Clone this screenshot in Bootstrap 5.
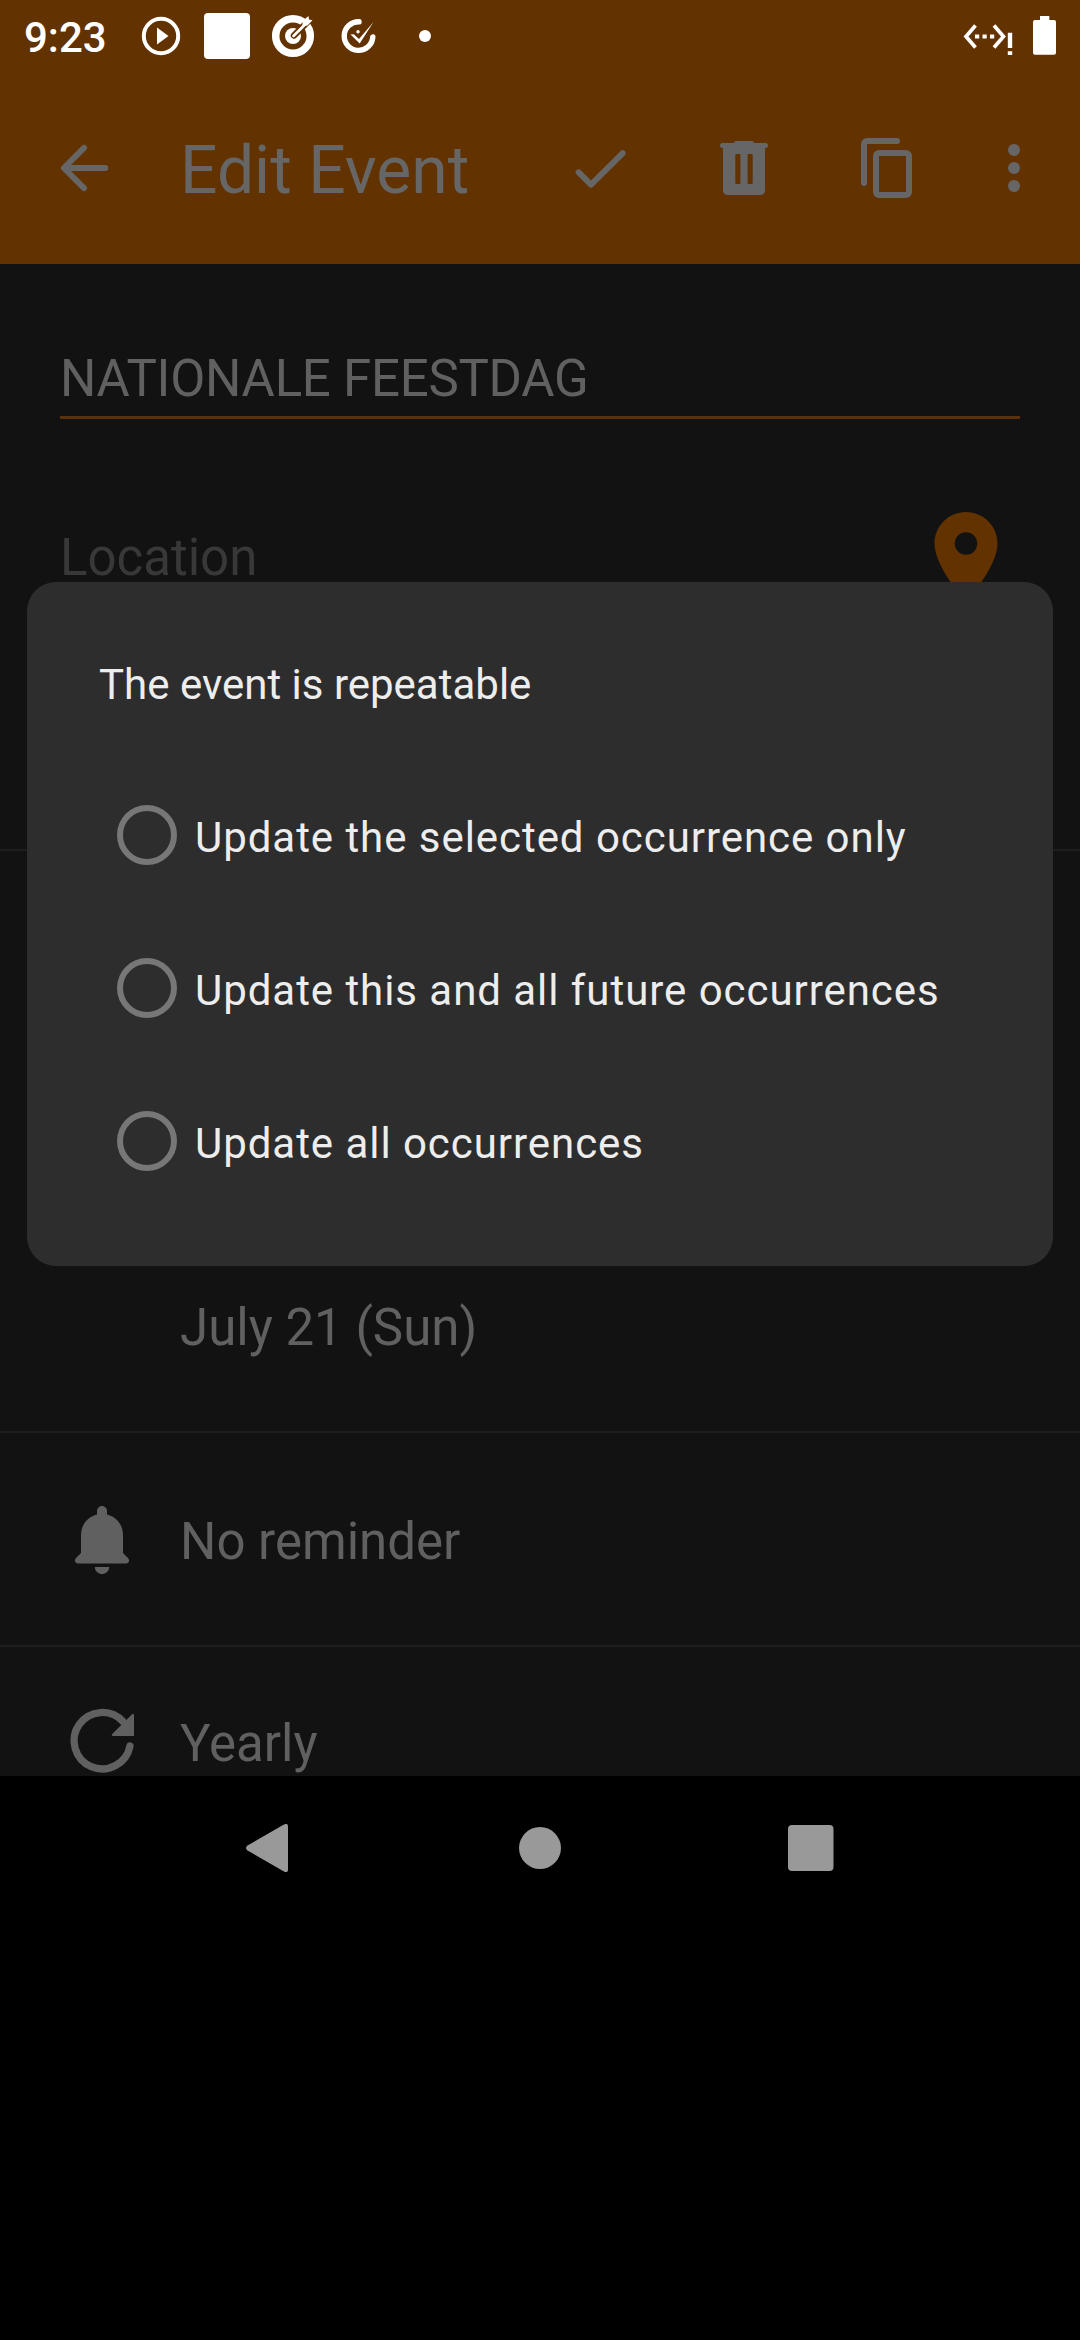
<!DOCTYPE html>
<html lang="en">
<head>
<meta charset="utf-8">
<meta name="viewport" content="width=device-width, initial-scale=1">
<title>Edit Event</title>
<link href="https://cdn.jsdelivr.net/npm/bootstrap@5.3.0/dist/css/bootstrap.min.css" rel="stylesheet">
<style>
  body { background: #000; font-family: Roboto, "Noto Sans", sans-serif; width: 1080px; height: 2340px; overflow: hidden; line-height: 1; }
  svg { display: block; flex: none; }
  .screen { height: 1776px; background: #121212; }
  .screen > * { flex: none; }
  .status { height: 72px; background: #623200; padding-left: 24px; padding-right: 21px; }
  .clock { font-size: 42px; font-weight: 500; color: #fff; width: 115px; line-height: 76px; height: 72px; }
  .toolbar { height: 192px; background: #623200; padding: 0 30px 0 48px; color: #666; }
  .toolbar h1 { font-size: 66px; font-weight: 400; line-height: 72px; margin: 6px 0 0 60px; width: 384px; white-space: nowrap; }
  .tools { gap: 72px; }
  .tools svg:last-child { margin-left: -18px; }
  .fld { font-size: 51px; line-height: 60px; white-space: nowrap; }
  .field-title { margin: 0 60px; padding-top: 85px; height: 155px; border-bottom: 3px solid #5c310b; color: #606060; letter-spacing: -.25px; }
  .field-place { margin: 0 60px; padding-top: 84px; height: 430px; color: #383838; }
  .field-place span { margin-top: 25px; }
  .field-place svg { color: #623200; }
  .line { border-bottom: 2px solid #1d1d1d; }
  .dates { height: 582px; padding: 0 0 73px 180px; color: #606060; }
  .opt-row { padding-left: 48px; color: #606060; }
  .opt-row svg { margin-right: 24px; }
  .opt-row span { margin-top: 2px; }
  .row-reminder { height: 214px; padding-top: 3px; }
  .row-repeat { height: 191px; }
  .dialog { left: 27px; top: 582px; width: 1026px; height: 684px; background: #2d2d2d; border-radius: 29px; color: #ededed; padding: 76px 72px 0; }
  .dialog h2 { font-size: 42px; font-weight: 400; line-height: 54px; margin: 0 0 46px; }
  .dialog .form-check { height: 153px; padding: 0 0 0 18px; margin: 0; }
  .dialog .form-check-input { width: 60px; height: 60px; margin: 0; border: 6px solid #777; background: transparent; float: none; flex: none; }
  .dialog label { font-size: 42px; line-height: 54px; margin: 6px 0 0 18px; letter-spacing: .95px; white-space: nowrap; }
  .softkeys { height: 144px; padding-left: 246px; }
  .softkeys .home { margin: 0 227px 0 231px; }
</style>
</head>
<body>
<main class="screen d-flex flex-column overflow-hidden position-relative">
  <header>
    <div class="status d-flex justify-content-between">
      <div class="d-flex">
        <span class="clock">9:23</span>
        <svg width="300" height="72" viewBox="139 0 300 72" fill="#fff">
          <circle cx="161" cy="36" r="17.2" fill="none" stroke="#fff" stroke-width="4"/>
          <path d="M157 27.500v17l11.500-8.500z"/>
          <rect x="204" y="13" width="46" height="46" rx="4"/>
          <circle cx="293" cy="36" r="17.300" fill="none" stroke="#fff" stroke-width="7.500"/>
          <circle cx="293" cy="36" r="8"/>
          <path d="M294 35.500L312 17.500" stroke="#623200" stroke-width="6.500" stroke-linecap="round" fill="none"/>
          <path d="M293.500 36L306 23.500" stroke="#fff" stroke-width="2.600" stroke-linecap="round" fill="none"/>
          <path d="M302.500 23.500l.5-3 5.500-4.500.5 3.500 3.500.8-5 5.200-3 .4-2.500 1.800z"/>
          <path d="M359 21.800A14.300 14.300 0 1 0 372.800 37" fill="none" stroke="#fff" stroke-width="5.400" stroke-linecap="round"/>
          <path d="M350.500 34.500l3.200-.2 5.300 4.600L373.500 22l-13.800 21.500z" stroke="#623200" stroke-width="3" paint-order="stroke"/>
          <circle cx="358" cy="31.800" r="1.700"/>
          <circle cx="425" cy="36" r="6"/>
        </svg>
      </div>
      <svg width="100" height="72" viewBox="959 0 100 72" fill="#fff">
        <path d="M975.500 25.500L966 36.500l9.500 11M994 25.500l9.500 11-9.500 11" fill="none" stroke="#fff" stroke-width="3.700"/>
        <path d="M975 34.500h4.200v4H975zM982.500 34.500h4.200v4h-4.200zM990 34.500h4.200v4H990zM1007.800 32.700h4.400V48h-4.400zM1007.800 51.300h4.400V55h-4.400z"/>
        <path d="M1040 16h9.300v4h4.700a2 2 0 0 1 2 2v30.700a2 2 0 0 1-2 2h-19a2 2 0 0 1-2-2V22a2 2 0 0 1 2-2h5z"/>
      </svg>
    </div>
    <nav class="toolbar d-flex align-items-center">
      <svg width="72" height="72" viewBox="0 0 24 24" fill="none" stroke="currentColor" stroke-width="2" stroke-linecap="round" stroke-linejoin="round"><path d="M19.100 12H5.500M12 5.300L5.300 12l6.700 6.700"/></svg>
      <h1>Edit Event</h1>
      <div class="tools d-flex">
        <svg width="72" height="72" viewBox="0 0 24 24" fill="currentColor"><path d="M9 16.170L5.530 12.700a1 1 0 0 0-1.410 1.410l4.180 4.180c.39.39 1.020.39 1.410 0L20.290 7.710a1 1 0 0 0-1.410-1.410z"/></svg>
        <svg width="72" height="72" viewBox="0 0 72 72" fill="currentColor"><path fill-rule="evenodd" d="M28 9h16a2 2 0 0 1 2 2h11.500a2.400 2.400 0 0 1 0 5H57v42.500a4.500 4.500 0 0 1-4.500 4.500h-33a4.500 4.500 0 0 1-4.500-4.500V16h-.5a2.400 2.400 0 0 1 0-5H26a2 2 0 0 1 2-2zM28.500 22q-1.200 0-1.200 1.200v27.600q0 1.200 1.200 1.200h2.700q1.200 0 1.200-1.200V23.200q0-1.200-1.200-1.200zM40.800 22q-1.200 0-1.200 1.200v27.600q0 1.200 1.200 1.200h2.700q1.200 0 1.200-1.200V23.200q0-1.200-1.200-1.200z"/></svg>
        <svg width="72" height="72" viewBox="0 0 72 72" fill="none" stroke="currentColor" stroke-width="6" stroke-linecap="round"><path d="M45 9H15a3 3 0 0 0-3 3v39"/><rect x="24" y="21" width="33" height="42" rx="3"/></svg>
        <svg width="72" height="72" viewBox="0 0 72 72" fill="currentColor"><circle cx="36" cy="18" r="6"/><circle cx="36" cy="36" r="6"/><circle cx="36" cy="54" r="6"/></svg>
      </div>
    </nav>
  </header>

  <div class="field-title fld">NATIONALE FEESTDAG</div>
  <div class="field-place fld d-flex justify-content-between">
    <span>Location</span>
    <svg width="108" height="108" viewBox="0 0 24 24" fill="currentColor"><path d="M12 2C8.130 2 5 5.130 5 9c0 5.250 7 13 7 13s7-7.750 7-13c0-3.870-3.130-7-7-7zm0 9.500a2.500 2.500 0 0 1 0-5 2.500 2.500 0 0 1 0 5z"/></svg>
  </div>
  <div class="line"></div>
  <div class="dates line fld d-flex align-items-end">July 21 (Sun)</div>
  <div class="opt-row row-reminder line fld d-flex align-items-center">
    <svg width="108" height="108" viewBox="0 0 108 108" fill="currentColor"><path d="M54 19a5 5 0 0 1 5 5v3.500c9.500 2.300 16 10 16 21V66l5 5c2 2 1 5.500-2 5.500H30c-3 0-4-3.500-2-5.500l5-5V48.500c0-11 6.500-18.700 16-21V24a5 5 0 0 1 5-5zM46.800 80h14.400a7.200 7.200 0 0 1-14.400 0z"/></svg>
    <span>No reminder</span>
  </div>
  <div class="opt-row row-repeat fld d-flex align-items-center">
    <svg width="108" height="108" viewBox="0 0 108 108"><path d="M75 32.500A28.200 28.200 0 1 0 82 57" fill="none" stroke="currentColor" stroke-width="7.300" stroke-linecap="round"/><path d="M83.800 25.500q2.200-2 2.200 1V47H65.500q-3 0-1-2.200z" fill="currentColor"/></svg>
    <span>Yearly</span>
  </div>

  <section class="dialog position-absolute" role="dialog">
    <h2>The event is repeatable</h2>
    <div class="form-check d-flex align-items-center"><input class="form-check-input" type="radio" name="scope" id="s1"><label for="s1">Update the selected occurrence only</label></div>
    <div class="form-check d-flex align-items-center"><input class="form-check-input" type="radio" name="scope" id="s2"><label for="s2">Update this and all future occurrences</label></div>
    <div class="form-check d-flex align-items-center"><input class="form-check-input" type="radio" name="scope" id="s3"><label for="s3">Update all occurrences</label></div>
  </section>
</main>
<footer class="softkeys d-flex align-items-center">
  <svg width="42" height="48" viewBox="0 0 42 48" fill="#999"><path d="M38 .6q4-2 4 2v42.800q0 4-4 2L1.500 26.500q-3-2.500 0-5z"/></svg>
  <svg class="home" width="42" height="42" viewBox="0 0 42 42" fill="#999"><circle cx="21" cy="21" r="21"/></svg>
  <svg width="46" height="46" viewBox="0 0 46 46" fill="#999"><rect width="45.500" height="46" rx="4"/></svg>
</footer>
<script src="https://cdn.jsdelivr.net/npm/bootstrap@5.3.0/dist/js/bootstrap.bundle.min.js"></script>
</body>
</html>
